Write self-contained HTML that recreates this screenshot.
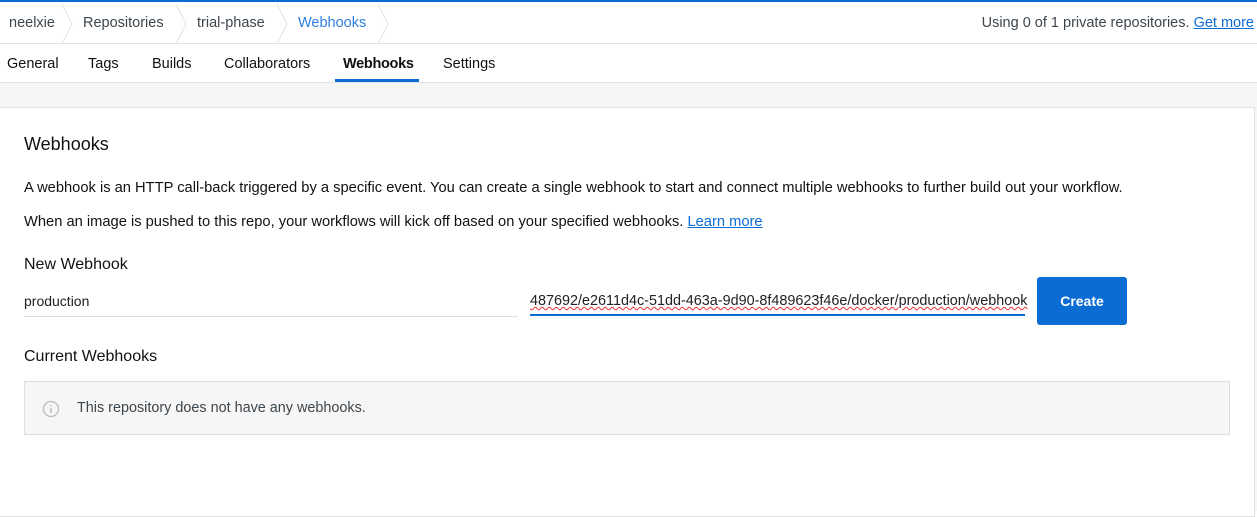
<!DOCTYPE html>
<html><head><meta charset="utf-8"><style>
*{box-sizing:border-box;margin:0;padding:0}
body{width:1257px;height:511px;background:#fff;font-family:"Liberation Sans",sans-serif;color:#1f2a33;position:relative;overflow:hidden;font-size:14px}
.topbar{position:absolute;left:0;top:0;width:1257px;height:2px;background:#0b6dd4}
.crumbs{position:absolute;top:2px;left:0;width:1257px;height:42px;border-bottom:1px solid #e2e2e2}
.crumb{position:absolute;top:13px;font-size:14.5px;color:#3d464d}
.sep{position:absolute;top:2px}
.usage{position:absolute;right:3px;top:13px;font-size:14.5px;color:#3d464d}
.usage a{color:#0b6dd4;text-decoration:underline}
.tabs{position:absolute;top:44px;left:0;width:1257px;height:39px;border-bottom:1px solid #e2e2e2}
.tab{position:absolute;top:12px;font-size:14.5px;color:#111}
.ul{position:absolute;left:335px;top:35px;width:84px;height:3px;background:#0b6dd4}
.grey{position:absolute;top:83px;left:0;width:1257px;height:428px;background:#f6f6f6}
.card{position:absolute;top:107px;left:-2px;width:1257px;height:410px;background:#fff;border:1px solid #e2e2e2}
.t{position:absolute;left:24px}
.info{position:absolute;left:24px;top:381px;width:1206px;height:54px;background:#f6f6f6;border:1px solid #dedede}
.btn{position:absolute;left:1037px;top:277px;width:90px;height:48px;background:#0b6dd4;border-radius:3px;color:#fff;font-weight:bold;font-size:14px;text-align:center;line-height:48px}
</style></head><body>
<div class="topbar"></div>
<div class="crumbs">
<span class="crumb" style="left:9px">neelxie</span>
<svg class="sep" style="left:61px" width="12" height="40"><path d="M1 0 L11 20 L1 40" fill="none" stroke="#e2e2e2"/></svg>
<span class="crumb" style="left:83px">Repositories</span>
<svg class="sep" style="left:175px" width="12" height="40"><path d="M1 0 L11 20 L1 40" fill="none" stroke="#e2e2e2"/></svg>
<span class="crumb" style="left:197px">trial-phase</span>
<svg class="sep" style="left:276px" width="12" height="40"><path d="M1 0 L11 20 L1 40" fill="none" stroke="#e2e2e2"/></svg>
<span class="crumb" style="left:298px;color:#2f7fe0">Webhooks</span>
<svg class="sep" style="left:377px" width="12" height="40"><path d="M1 0 L11 20 L1 40" fill="none" stroke="#e2e2e2"/></svg>
<span class="usage">Using 0 of 1 private repositories. <a>Get more</a></span>
</div>
<div class="tabs">
<span class="tab" style="left:7px">General</span>
<span class="tab" style="left:88px">Tags</span>
<span class="tab" style="left:152px">Builds</span>
<span class="tab" style="left:224px">Collaborators</span>
<span class="tab" style="left:343px;font-weight:bold;letter-spacing:-0.3px">Webhooks</span>
<span class="tab" style="left:443px">Settings</span>
<div class="ul"></div>
</div>
<div class="grey"></div>
<div class="card"></div>
<div class="t" style="top:134px;font-size:18px;color:#111">Webhooks</div>
<div class="t" style="top:180px;font-size:14.7px;color:#111">A webhook is an HTTP call-back triggered by a specific event. You can create a single webhook to start and connect multiple webhooks to further build out your workflow.</div>
<div class="t" style="top:214px;font-size:14.7px;color:#111">When an image is pushed to this repo, your workflows will kick off based on your specified webhooks. <span style="color:#0b6dd4;text-decoration:underline">Learn more</span></div>
<div class="t" style="top:256px;font-size:16px;color:#111">New Webhook</div>
<div class="t" style="top:293px;font-size:14px;color:#222">production</div>
<div style="position:absolute;left:24px;top:316px;width:494px;height:1px;background:#ddd"></div>
<div style="position:absolute;left:530px;top:293px;font-size:14.4px;color:#222;text-decoration:underline wavy #e33;text-decoration-thickness:1px">487692/e2611d4c-51dd-463a-9d90-8f489623f46e/docker/production/webhook</div>
<div style="position:absolute;left:530px;top:314px;width:495px;height:2px;background:#0b6dd4"></div>
<div class="btn">Create</div>
<div class="t" style="top:348px;font-size:16px;color:#111">Current Webhooks</div>
<div class="info">
<svg style="position:absolute;left:17px;top:18px" width="18" height="18" viewBox="0 0 18 18"><circle cx="9" cy="9" r="7.5" fill="none" stroke="#bbb" stroke-width="1.3"/><rect x="8.3" y="8" width="1.4" height="5" fill="#bbb"/><rect x="8.3" y="5" width="1.4" height="1.5" fill="#bbb"/></svg>
<span style="position:absolute;left:52px;top:18px;font-size:14.4px;color:#3d464d">This repository does not have any webhooks.</span>
</div>
</body></html>
